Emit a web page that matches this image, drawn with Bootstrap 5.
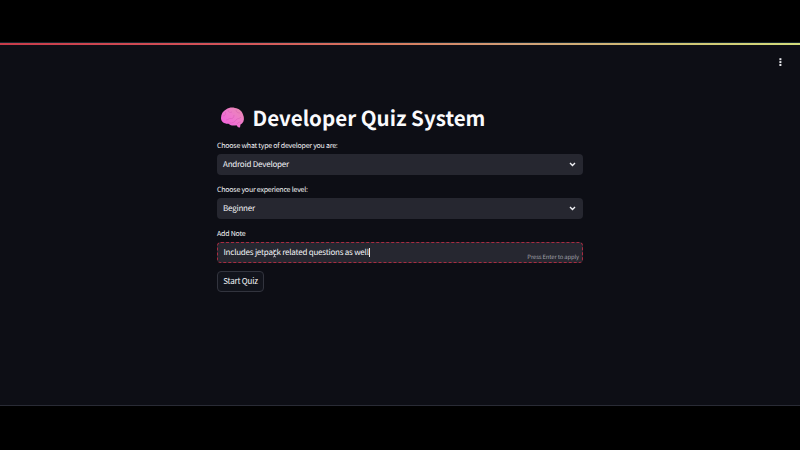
<!DOCTYPE html>
<html lang="en" data-bs-theme="dark">
<head>
<meta charset="utf-8">
<meta name="viewport" content="width=device-width, initial-scale=1">
<title>Developer Quiz System</title>
<link href="https://cdn.jsdelivr.net/npm/bootstrap@5.3.0/dist/css/bootstrap.min.css" rel="stylesheet">
<style>
body{background:#000;height:450px;overflow:hidden;font-family:"Noto Sans CJK SC","Noto Sans",sans-serif;color:#f4f5f8;padding:42px 0 44px;text-rendering:geometricPrecision}
.app-window{height:364px;background:#0d0e15;border-bottom:1px solid #292b35;border-top:1px solid #15252d}
.rainbow{height:2px;background:linear-gradient(90deg,#c83c4a 0%,#d4555a 30%,#d67d60 50%,#d0a078 65%,#cfc475 85%,#d3dc7c 100%)}
.kebab{top:13px;right:17px;line-height:0}
.quiz-form{width:366px;margin-left:217px;padding-top:56px}
.quiz-title{font-size:20.55px;font-weight:700;line-height:32px;height:32px;margin:0;white-space:nowrap;color:#fafafc}
.brain{width:25px;height:23px;margin:1px 7.5px 0 3px;flex:none}
.quiz-label{font-size:7px;letter-spacing:-.21px;line-height:12px;height:12px;margin:0;display:block;white-space:nowrap}
.first-label{margin-top:7px}
.quiz-label+.field{margin-top:2px}
.field+.quiz-label{margin-top:9px}
.field{height:21px;background:#262730;border-radius:4px;font-size:8px;letter-spacing:-.22px;line-height:20px;padding:0 6px;white-space:nowrap}
.note{border:1px dashed #aa2b41;padding:0 4px 0 5.5px}
.caret{width:1px;height:9px;background:#e8e9ef}
.hint{font-size:5.8px;letter-spacing:-.1px;line-height:8px;color:#a0a1a9;right:3px;bottom:1px}
.pointer{left:54px;top:6px;line-height:0}
.start{width:47px;height:21px;font-size:8px;letter-spacing:-.19px;line-height:17px;background:#12141c;border:1px solid #32343e;border-radius:4px;color:#f4f5f8;padding:0 0 2px;margin-top:8px}
</style>
</head>
<body>
<main class="app-window position-relative">
  <div class="rainbow"></div>
  <div class="kebab position-absolute"><svg width="5" height="12" viewBox="0 0 5 12" fill="#e6e7ec"><rect x="1.4" y="2.2" width="2" height="2"/><rect x="1.4" y="5.1" width="2" height="2"/><rect x="1.4" y="8" width="2" height="2"/></svg></div>
  <form class="quiz-form d-flex flex-column align-items-stretch">
    <div class="d-flex align-items-center">
      <svg class="brain" viewBox="0 0 25 23">
        <defs><linearGradient id="pink" x1="0" y1="1" x2="1" y2="0"><stop offset="0" stop-color="#f45be0"/><stop offset=".55" stop-color="#ef79cb"/><stop offset="1" stop-color="#e68cab"/></linearGradient></defs>
        <path fill="url(#pink)" d="M1 12C1 8 3 5 6 3.500C9 1.500 12 1 15 2C19 2.500 22 5 23 8.500C24.500 12 24.300 15.500 22 17.500L20.500 18.500L20 21.500L18 21.300L16.500 19.300C13 20 10.500 19.500 8.500 17.700C4.500 18 1 16 1 12Z"/>
        <path fill="none" stroke="#cf56ae" stroke-width=".7" opacity=".6" d="M3 10C5 10 6 8 5.500 6M8 4C8 6 10 7 12 6M6 14C8 14 9 12 11 12.500S14 11 14 9M9 17C12 17.500 15 16 16 14S20 13 21 11M16 4C16 6 18 7 20 7M17 18C18 16 20 16 21 16"/>
      </svg>
      <h1 class="quiz-title">Developer Quiz System</h1>
    </div>
    <label class="quiz-label first-label"><span>Choose what type of developer you are:</span></label>
    <div class="field d-flex align-items-center justify-content-between"><span>Android Developer</span>
      <svg width="9" height="7" viewBox="0 0 9 7" fill="none" stroke="#f0f1f5" stroke-width="1.400"><path d="M2 2L4.500 4.500L7 2"/></svg></div>
    <label class="quiz-label"><span>Choose your experience level:</span></label>
    <div class="field d-flex align-items-center justify-content-between"><span>Beginner</span>
      <svg width="9" height="7" viewBox="0 0 9 7" fill="none" stroke="#f0f1f5" stroke-width="1.400"><path d="M2 2L4.500 4.500L7 2"/></svg></div>
    <label class="quiz-label"><span>Add Note</span></label>
    <div class="field note position-relative d-flex align-items-center"><span>Includes jetpack related questions as well</span><i class="caret"></i>
      <span class="hint position-absolute">Press Enter to apply</span>
      <span class="pointer position-absolute"><svg width="5" height="9" viewBox="0 0 5 9" fill="none" stroke="#d8d9df" stroke-width=".7"><path d="M1 1L2.500 1.500L4 1M2.500 1.500V3M2.500 5.500V7.500M1 8L2.500 7.500L4 8"/></svg></span></div>
    <button type="button" class="btn start align-self-start">Start Quiz</button>
  </form>
</main>
<script src="https://cdn.jsdelivr.net/npm/bootstrap@5.3.0/dist/js/bootstrap.bundle.min.js"></script>
</body>
</html>
